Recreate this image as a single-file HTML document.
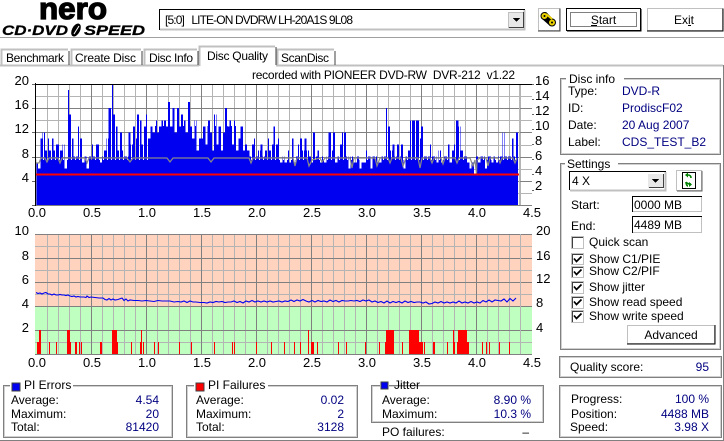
<!DOCTYPE html>
<html><head><meta charset="utf-8"><style>
html,body{margin:0;padding:0;background:#fff;overflow:hidden}
svg{display:block}
text{font-family:"Liberation Sans","Noto Sans CJK JP",sans-serif;font-size:12px;fill:#000;white-space:pre}
.v{fill:#000080}
.e{text-anchor:end}
.m{text-anchor:middle}
.a{font-size:13px}
</style></head><body>
<svg width="724" height="441" viewBox="0 0 724 441" xmlns="http://www.w3.org/2000/svg" shape-rendering="crispEdges">
<defs>
<path id="vm" fill="none" stroke="#b4b4b4" d="M47.5 0v121m11-121v121m11-121v121m11-121v121m22-121v121m11-121v121m11-121v121m11-121v121m22-121v121m11-121v121m11-121v121m11-121v121m22-121v121m11-121v121m11-121v121m11-121v121m22-121v121m11-121v121m11-121v121m11-121v121m22-121v121m11-121v121m11-121v121m11-121v121m22-121v121m11-121v121m11-121v121m11-121v121m22-121v121m11-121v121m11-121v121m11-121v121m22-121v121m11-121v121m11-121v121m11-121v121"/>
<path id="vM" fill="none" stroke="#808080" d="M91.5 0v121m55-121v121m55-121v121m55-121v121m55-121v121m55-121v121m55-121v121m55-121v121"/>
<pattern id="st" x="0" y="0" width="4" height="4" patternUnits="userSpaceOnUse"><rect width="3" height="4" fill="#fff"/></pattern>
<mask id="mk" maskUnits="userSpaceOnUse" x="30" y="80" width="500" height="130">
<rect x="36" y="84" width="114" height="76" fill="url(#st)"/>
<rect x="150" y="84" width="100" height="42" fill="url(#st)"/>
<rect x="150" y="126" width="100" height="34" fill="#fff"/>
<rect x="250" y="84" width="270" height="76" fill="url(#st)"/>
<rect x="36" y="160" width="484" height="46" fill="#fff"/>
</mask>
</defs>

<!-- header -->
<path d="M0 37.500H724" stroke="#a0a0a0"/>
<g shape-rendering="auto">
<text x="39" y="19" style="font-size:31px;font-weight:bold;stroke:#000;stroke-width:1.300" textLength="68" lengthAdjust="spacingAndGlyphs">nero</text>
<text x="2" y="35" style="font-size:14px;font-weight:bold;font-style:italic;stroke:#000;stroke-width:.3" textLength="66" lengthAdjust="spacingAndGlyphs">CD·DVD</text>
<ellipse cx="76" cy="30" rx="4" ry="7" transform="rotate(28 76 30)" fill="#000"/>
<path d="M74 34L79 26" stroke="#fff" stroke-width="1" fill="none"/>
<text x="84" y="35" style="font-size:14px;font-weight:bold;font-style:italic;stroke:#000;stroke-width:.3" textLength="61" lengthAdjust="spacingAndGlyphs">SPEED</text>
</g>

<!-- drive combo -->
<rect x="159" y="9" width="366" height="21" fill="#fff"/>
<path d="M159.500 30V9.500H525" fill="none" stroke="#000"/>
<path d="M160 29.500H524.500V10" fill="none" stroke="#c0c0c0" stroke-width="2"/>
<text x="165" y="24" textLength="188">[5:0]   LITE-ON DVDRW LH-20A1S 9L08</text>
<rect x="508" y="12" width="15" height="16" fill="#e8e8e8"/>
<path d="M508.500 28V12.500H523" stroke="#c0c0c0" fill="none"/>
<path d="M509 27.500H523.500V12" stroke="#404040" fill="none"/>
<path d="M513 18h7l-3.500 4z" fill="#000"/>

<!-- icon button -->
<rect x="538.500" y="8.500" width="21" height="22" fill="#fff" stroke="#c0c0c0"/>
<path d="M560 8.500V31H538" fill="none" stroke="#404040"/>
<g shape-rendering="auto">
<path d="M542 15l4-3 9 9-1 4-4 1-9-8z" fill="#000"/>
<circle cx="544.500" cy="16" r="3.500" fill="#e8d000" stroke="#000"/>
<circle cx="552" cy="22.500" r="3.500" fill="#e8d000" stroke="#000"/>
<path d="M546 14l6 5" stroke="#e8d000" stroke-width="2" fill="none"/>
<circle cx="544.500" cy="16" r="1" fill="#000"/>
<circle cx="552" cy="22.500" r="1" fill="#000"/>
</g>

<!-- start/exit -->
<rect x="566.500" y="8.500" width="74" height="22" fill="#fff" stroke="#000"/>
<path d="M641 9V31H567" fill="none" stroke="#000"/>
<rect x="570.500" y="12.500" width="66" height="14" fill="none" stroke="#000" stroke-dasharray="1 1"/>
<text x="603.500" y="24" class="m">Start</text>
<path d="M591 25.500h6" stroke="#000"/>
<rect x="647.500" y="8.500" width="75" height="22" fill="#fff" stroke="#c0c0c0"/>
<path d="M723 8.500V31H647" fill="none" stroke="#000"/>
<text x="684" y="24" class="m">Exit</text>
<path d="M688 25.500h3" stroke="#000"/>

<!-- pane -->
<path d="M0 65.500H723" stroke="#c0c0c0" stroke-width="2"/>
<path d="M723.500 65V440" stroke="#808080"/>
<path d="M0 440.500H724" stroke="#808080"/>

<!-- tabs -->
<g fill="#fff" stroke="#c0c0c0">
<path d="M1.500 65V49.500H68" fill="none" stroke-width="2"/>
<path d="M71.500 65V49.500H141" fill="none" stroke-width="2"/>
<path d="M144.500 65V49.500H197" fill="none" stroke-width="2"/>
<path d="M277.500 65V49.500H334" fill="none" stroke-width="2"/>
</g>
<rect x="199" y="46" width="77" height="21" fill="#fff"/>
<path d="M199.500 66V46.500H275" fill="none" stroke="#c0c0c0" stroke-width="2"/>
<g fill="none" stroke="#404040">
<path d="M69 51V65"/><path d="M142 51V65"/><path d="M198 51V65"/><path d="M276 47V65"/><path d="M335 51V65"/>
</g>
<text x="6" y="62" textLength="58">Benchmark</text>
<text x="75" y="62" textLength="61">Create Disc</text>
<text x="149" y="62" textLength="44">Disc Info</text>
<text x="207" y="60" textLength="61">Disc Quality</text>
<text x="281" y="62" textLength="48">ScanDisc</text>
<text x="252" y="79" textLength="263">recorded with PIONEER DVD-RW  DVR-212  v1.22</text>

<!-- top chart -->
<rect x="36" y="84" width="496" height="121" fill="#fff"/>
<path fill="none" stroke="#b4b4b4" d="M36 96.500H532M36 120.500H532M36 145.500H532M36 169.500H532M36 193.500H532"/>
<use href="#vm" y="84"/>
<path fill="none" stroke="#808080" d="M36 108.500H532M36 132.500H532M36 157.500H532M36 181.500H532M36 205.500H532"/>
<use href="#vM" y="84"/>
<g mask="url(#mk)">
<path d="M0 0V7h1V6h1V11h1V12h1V9h1V11h1V9h1V11h1V9h1V10h1V10h1V9h1V10h1V6h1V19h1V15h1V11h1V8h1V8h1V13h1V11h1V7h1V8h1V6h1V8h1V10h1V8h1V10h1V10h1V7h1V8h1V9h1V11h1V16h1V20h1V15h1V13h1V9h1V12h1V9h1V8h1V8h1V12h1V10h1V13h1V11h1V15h1V14h1V10h1V13h1V15h1V11h1V13h1V12h1V14h1V12h1V13h1V14h1V14h1V13h1V17h1V13h1V16h1V12h1V16h1V13h1V15h1V14h1V12h1V17h1V13h1V11h1V14h1V9h1V11h1V11h1V13h1V10h1V14h1V12h1V9h1V15h1V10h1V13h1V9h1V12h1V16h1V13h1V14h1V10h1V14h1V9h1V11h1V13h1V9h1V10h1V9h1V8h1V10h1V11h1V8h1V9h1V10h1V8h1V9h1V11h1V9h1V10h1V13h1V10h1V11h1V7h1V8h1V7h1V9h1V7h1V11h1V7h1V8h1V10h1V11h1V9h1V11h1V9h1V8h1V7h1V12h1V8h1V9h1V7h1V8h1V7h1V8h1V12h1V9h1V12h1V7h1V8h1V10h1V12h1V12h1V8h1V6h1V8h1V7h1V7h1V8h1V6h1V7h1V7h1V9h1V8h1V6h1V8h1V8h1V7h1V7h1V8h1V8h1V16h1V13h1V9h1V10h1V8h1V10h1V8h1V10h1V6h1V8h1V9h1V14h1V14h1V14h1V14h1V11h1V13h1V8h1V8h1V8h1V10h1V8h1V8h1V7h1V9h1V7h1V8h1V8h1V10h1V7h1V9h1V10h1V14h1V13h1V9h1V8h1V8h1V7h1V6h1V7h1V5h1V8h1V7h1V8h1V8h1V6h1V8h1V8h1V7h1V8h1V7h1V8h1V8h1V12h1V8h1V8h1V8h1V11h1V8h1V12h1V0z" transform="translate(36 205) scale(2.2 -6.05)" fill="#0000f0"/>
</g>
<path d="M36 159.500V205M519.500 84V205" stroke="#b8b8b8" fill="none"/>
<polyline shape-rendering="auto" fill="none" stroke="#888" stroke-width="1.200" points="36,163 39,163 41,158 45,158 47,162 49,158 58,158 60,163 62,158 85,158 87,163 89,158 127,158 130,162 133,158 167,158 170,162 173,158 208,158 211,162 214,158 249,158 251,163 253,158 293,158 295,166 297,158 307,158 309,166 312,160 320,158 322,162 325,158 350,158 352,168 354,158 375,158 377,166 380,158 388,158 390,163 392,158 401,158 403,166 406,158 418,158 420,168 422,158 430,158 432,163 434,158 441,158 443,164 445,158 455,158 457,163 459,158 470,158 473,166 475,160 476.500,174 477,160 480,158 486,158 488,166 490,158 498,158 500,163 502,158 513,158 515,163 517,158"/>
<path d="M36 174.500H519" stroke="#ff0000" stroke-width="2"/>
<path d="M35.500 83V206M35 84.500H532" stroke="#000" fill="none"/>
<path d="M32 84.500h3M32 108.500h3M32 132.500h3M32 157.500h3M32 181.500h3M32 205.500h3M532 84.500h2M532 99.500h2M532 114.500h2M532 129.500h2M532 144.500h2M532 159.500h2M532 174.500h2M532 190.500h2" stroke="#000" fill="none" opacity=".6"/>
<g class="a">
<text class="a e" x="29" y="85">20</text>
<text class="a e" x="29" y="109">16</text>
<text class="a e" x="29" y="133">12</text>
<text class="a e" x="29" y="158">8</text>
<text class="a e" x="29" y="182">4</text>
<text class="a" x="535" y="85">16</text>
<text class="a" x="535" y="100">14</text>
<text class="a" x="535" y="115">12</text>
<text class="a" x="535" y="130">10</text>
<text class="a" x="535" y="145">8</text>
<text class="a" x="535" y="160">6</text>
<text class="a" x="535" y="175">4</text>
<text class="a" x="535" y="190">2</text>
<text class="a m" x="37" y="217">0.0</text><text class="a m" x="92" y="217">0.5</text><text class="a m" x="147" y="217">1.0</text><text class="a m" x="202" y="217">1.5</text><text class="a m" x="257" y="217">2.0</text><text class="a m" x="312" y="217">2.5</text><text class="a m" x="367" y="217">3.0</text><text class="a m" x="422" y="217">3.5</text><text class="a m" x="477" y="217">4.0</text><text class="a m" x="532" y="217">4.5</text>
</g>

<!-- bottom chart -->
<rect x="35" y="234" width="497" height="72" fill="#ffd3bd"/>
<rect x="35" y="306" width="497" height="48" fill="#bfffbf"/>
<path fill="none" stroke="#b4b4b4" d="M35 246.500H532M35 270.500H532M35 294.500H532M35 342.500H532"/>
<use href="#vm" y="234"/>
<path fill="none" stroke="#808080" d="M35 234.500H532M35 258.500H532M35 282.500H532M35 306.500H532M35 330.500H532M35 354.500H532"/>
<use href="#vM" y="234"/>
<path stroke="#b4b4b4" d="M520.500 234V354"/>
<path fill="#ff0000" d="M37 342h3v12h-3zM39 330h2v24h-2zM49 342h1v12h-1zM56 342h1v12h-1zM67 330h3v24h-3zM70 342h1v12h-1zM75 342h2v12h-2zM79 342h1v12h-1zM81 342h1v12h-1zM100 342h2v12h-2zM112 330h5v24h-5zM117 342h1v12h-1zM131 342h1v12h-1zM140 342h2v12h-2zM141 330h1v24h-1zM143 342h1v12h-1zM154 342h1v12h-1zM158 342h1v12h-1zM179 342h1v12h-1zM191 342h1v12h-1zM214 342h1v12h-1zM232 342h1v12h-1zM234 342h1v12h-1zM256 342h1v12h-1zM271 342h1v12h-1zM284 342h1v12h-1zM294 342h1v12h-1zM300 342h1v12h-1zM308 330h1v24h-1zM311 342h3v12h-3zM317 342h1v12h-1zM338 342h1v12h-1zM346 342h1v12h-1zM365 342h1v12h-1zM379 342h1v12h-1zM385 342h1v12h-1zM386 330h8v24h-8zM402 342h1v12h-1zM409 330h10v24h-10zM419 342h4v12h-4zM424 342h1v12h-1zM433 342h2v12h-2zM447 342h1v12h-1zM453 330h1v24h-1zM454 342h1v12h-1zM457 342h1v12h-1zM458 330h9v24h-9zM467 342h2v12h-2zM482 342h1v12h-1zM486 342h1v12h-1zM489 342h1v12h-1zM499 342h1v12h-1zM509 342h1v12h-1z"/>
<polyline shape-rendering="auto" fill="none" stroke="#0000f0" stroke-width="1.100" points="36,292.500 38,293.500 40,293 42,294 44,293 46,292.500 48,294 50,294 52,295 54,294 56,295 58,295 60,294.500 62,295 64,295 66,295.500 68,295 70,296 72,296.500 74,296 76,297 78,296.500 80,297 82,297 84,297 86,297.500 87,296 89,297.500 91,297 95,297.500 99,298 103,298 105,299.500 107,300 109,298.500 111,300 113,299 115,300 118,299.500 122,298 124,300.500 126,299 128,301 130,300 134,300.500 138,300.500 142,301 146,300.500 150,301 154,301.500 158,300.500 162,301 166,301 170,301 174,302 178,301.500 181,302 184,301 187,302.500 190,301 193,302 196,302 200,302.500 204,302.500 207,303 210,302 213,302.500 216,301.500 219,302 222,301.500 225,302.500 228,302 231,302 234,301 237,302.500 240,301.500 243,303 246,301 249,302 252,300.500 255,302 258,301 261,302 264,301 267,302 270,301 273,302 276,301.500 279,301 282,302 285,301 288,301.500 291,300 294,301.500 297,300 300,301 303,299.500 306,301 309,302 312,300.500 315,302 318,300.500 321,301.500 324,301 327,302 330,300 333,301.500 336,300.500 339,302 342,300.500 345,301 348,301 351,300.500 354,301 357,300.500 360,301.500 363,300 366,301 369,300 372,302 375,301 378,302.500 381,301.500 384,303 387,301 390,303 393,301.500 396,302.500 399,301.500 402,303 405,301 408,302.500 411,301.500 414,302.500 417,302 420,302 423,303 426,302 429,304 432,303.500 435,302 438,303 441,301.500 444,303 447,302 450,303 453,302 456,303 459,301 462,303 465,302 468,303 471,301.500 474,303 477,302 480,303 483,300.500 486,302 489,300 492,302 495,300 498,300.500 501,301 504,299 507,302 510,298.500 513,301 516,298"/>
<text class="a e" x="29" y="235">10</text>
<text class="a e" x="29" y="260">8</text>
<text class="a e" x="29" y="284">6</text>
<text class="a e" x="29" y="308">4</text>
<text class="a e" x="29" y="332">2</text>
<text class="a" x="536" y="235">20</text>
<text class="a" x="536" y="260">16</text>
<text class="a" x="536" y="283">12</text>
<text class="a" x="536" y="307">8</text>
<text class="a" x="536" y="332">4</text>
<text class="a m" x="37" y="367">0.0</text><text class="a m" x="92" y="367">0.5</text><text class="a m" x="147" y="367">1.0</text><text class="a m" x="202" y="367">1.5</text><text class="a m" x="257" y="367">2.0</text><text class="a m" x="312" y="367">2.5</text><text class="a m" x="367" y="367">3.0</text><text class="a m" x="422" y="367">3.5</text><text class="a m" x="477" y="367">4.0</text><text class="a m" x="532" y="367">4.5</text>

<!-- PI Errors -->
<rect x="3.500" y="385.500" width="169" height="52" fill="#fff" stroke="#808080"/>
<rect x="4.500" y="386.500" width="167" height="50" fill="none" stroke="#d0d0d0"/>
<rect x="10" y="383" width="63" height="6" fill="#fff"/>
<rect x="12" y="383" width="8" height="8" fill="#0000f0" stroke="#404040"/>
<text x="24" y="389">PI Errors</text>
<text x="11" y="404">Average:</text><text x="11" y="418">Maximum:</text><text x="11" y="431">Total:</text>
<text class="v e" x="159" y="404">4.54</text><text class="v e" x="159" y="418">20</text><text class="v e" x="159" y="431">81420</text>

<!-- PI Failures -->
<rect x="186.500" y="385.500" width="171" height="52" fill="#fff" stroke="#808080"/>
<rect x="187.500" y="386.500" width="169" height="50" fill="none" stroke="#d0d0d0"/>
<rect x="194" y="383" width="74" height="6" fill="#fff"/>
<rect x="196" y="383" width="8" height="8" fill="#ff0000" stroke="#404040"/>
<text x="208" y="389">PI Failures</text>
<text x="196" y="404">Average:</text><text x="196" y="418">Maximum:</text><text x="196" y="431">Total:</text>
<text class="v e" x="344" y="404">0.02</text><text class="v e" x="344" y="418">2</text><text class="v e" x="344" y="431">3128</text>

<!-- Jitter -->
<rect x="371.500" y="385.500" width="172" height="37" fill="#fff" stroke="#808080"/>
<rect x="372.500" y="386.500" width="170" height="35" fill="none" stroke="#d0d0d0"/>
<rect x="380" y="382" width="9" height="7" fill="#fff"/>
<rect x="381" y="382" width="7" height="7" fill="#0000f0" stroke="#404040"/>
<text x="394" y="389">Jitter</text>
<text x="382" y="404">Average:</text><text x="382" y="418">Maximum:</text>
<text class="v e" x="531" y="404">8.90 %</text><text class="v e" x="531" y="418">10.3 %</text>
<text x="382" y="436">PO failures:</text>
<text class="e" x="529" y="436">–</text>

<!-- Disc info -->
<rect x="560.500" y="78.500" width="160" height="76" fill="#fff" stroke="#808080"/>
<rect x="561.500" y="79.500" width="158" height="74" fill="none" stroke="#d0d0d0"/>
<rect x="566" y="76" width="58" height="6" fill="#fff"/>
<text x="569" y="83">Disc info</text>
<text x="568" y="95">Type:</text><text x="568" y="112">ID:</text><text x="568" y="129">Date:</text><text x="568" y="146">Label:</text>
<text class="v" x="622" y="95">DVD-R</text><text class="v" x="622" y="112">ProdiscF02</text><text class="v" x="622" y="129">20 Aug 2007</text><text class="v" x="622" y="146">CDS_TEST_B2</text>

<!-- Settings -->
<rect x="560.500" y="163.500" width="160" height="186" fill="#fff" stroke="#808080"/>
<rect x="561.500" y="164.500" width="158" height="184" fill="none" stroke="#d0d0d0"/>
<rect x="565" y="161" width="53" height="6" fill="#fff"/>
<text x="567" y="168">Settings</text>
<rect x="569.500" y="171.500" width="96" height="19" fill="#fff"/>
<path d="M569.500 190V171.500H666" fill="none" stroke="#000"/>
<path d="M570 190.500H665.500V172" fill="none" stroke="#c0c0c0" stroke-width="2"/>
<text x="572" y="185">4 X</text>
<rect x="648" y="174" width="15" height="14" fill="#e8e8e8"/>
<path d="M649 187.500H663.500V174" stroke="#404040" fill="none"/>
<path d="M652 179h7l-3.500 4z" fill="#000"/>
<rect x="676.500" y="170.500" width="25" height="20" fill="#fff" stroke="#c0c0c0"/>
<path d="M702 171V191H677" fill="none" stroke="#606060"/>
<rect x="682.500" y="172.500" width="13" height="16" fill="#fff" stroke="#000"/>
<g shape-rendering="auto" fill="none" stroke="#008000" stroke-width="1.600">
<path d="M691 178c0-2-1-3-3-3M688 186c-1 0-2-2-2-4"/>
<path d="M686 182c1 2 3 2 5 2"/>
<path d="M688 172.500v5l-3-2.500zM689 182v5l3-2.500z" fill="#008000" stroke="none"/>
</g>
<text x="571" y="209">Start:</text>
<rect x="632.500" y="196.500" width="69" height="15" fill="#fff" stroke="#c0c0c0"/>
<path d="M632.500 212V196.500H702" fill="none" stroke="#000"/>
<text x="634" y="209">0000 MB</text>
<text x="571" y="230">End:</text>
<rect x="632.500" y="216.500" width="69" height="16" fill="#fff" stroke="#c0c0c0"/>
<path d="M632.500 233V216.500H702" fill="none" stroke="#000"/>
<text x="634" y="229">4489 MB</text>

<g fill="#fff" stroke="#c0c0c0">
<rect x="571.500" y="236.500" width="12" height="12"/>
<rect x="571.500" y="253.500" width="12" height="11"/>
<rect x="571.500" y="266.500" width="12" height="11"/>
<rect x="571.500" y="281.500" width="12" height="12"/>
<rect x="571.500" y="296.500" width="12" height="12"/>
<rect x="571.500" y="310.500" width="12" height="12"/>
</g>
<path fill="none" stroke="#404040" d="M572.500 248V237.500H583M572.500 264V254.500H583M572.500 277V267.500H583M572.500 293V282.500H583M572.500 308V297.500H583M572.500 322V311.500H583"/>
<g shape-rendering="auto" fill="none" stroke="#000" stroke-width="1.700">
<path d="M574 258.500l2.500 3 5-5"/>
<path d="M574 271.500l2.500 3 5-5"/>
<path d="M574 286.500l2.500 3 5-5"/>
<path d="M574 301.500l2.500 3 5-5"/>
<path d="M574 315.500l2.500 3 5-5"/>
</g>
<text x="589" y="246">Quick scan</text>
<text x="589" y="263">Show C1/PIE</text>
<text x="589" y="275">Show C2/PIF</text>
<text x="589" y="291">Show jitter</text>
<text x="589" y="306">Show read speed</text>
<text x="589" y="320">Show write speed</text>
<rect x="627.500" y="325.500" width="87" height="18" fill="#fff" stroke="#c0c0c0"/>
<path d="M715 325V344H627" fill="none" stroke="#000"/>
<text class="m" x="671" y="339">Advanced</text>

<!-- Quality -->
<rect x="559.500" y="356.500" width="162" height="21" fill="#fff" stroke="#808080"/>
<rect x="560.500" y="357.500" width="160" height="19" fill="none" stroke="#d0d0d0"/>
<text x="570" y="371">Quality score:</text>
<text class="v e" x="709" y="371">95</text>

<!-- Progress -->
<rect x="559.500" y="385.500" width="162" height="52" fill="#fff" stroke="#808080"/>
<rect x="560.500" y="386.500" width="160" height="50" fill="none" stroke="#d0d0d0"/>
<text x="571" y="403">Progress:</text><text x="571" y="418">Position:</text><text x="570" y="431">Speed:</text>
<text class="v e" x="709" y="403">100 %</text><text class="v e" x="709" y="418">4488 MB</text><text class="v e" x="709" y="431">3.98 X</text>
</svg>
</body></html>
